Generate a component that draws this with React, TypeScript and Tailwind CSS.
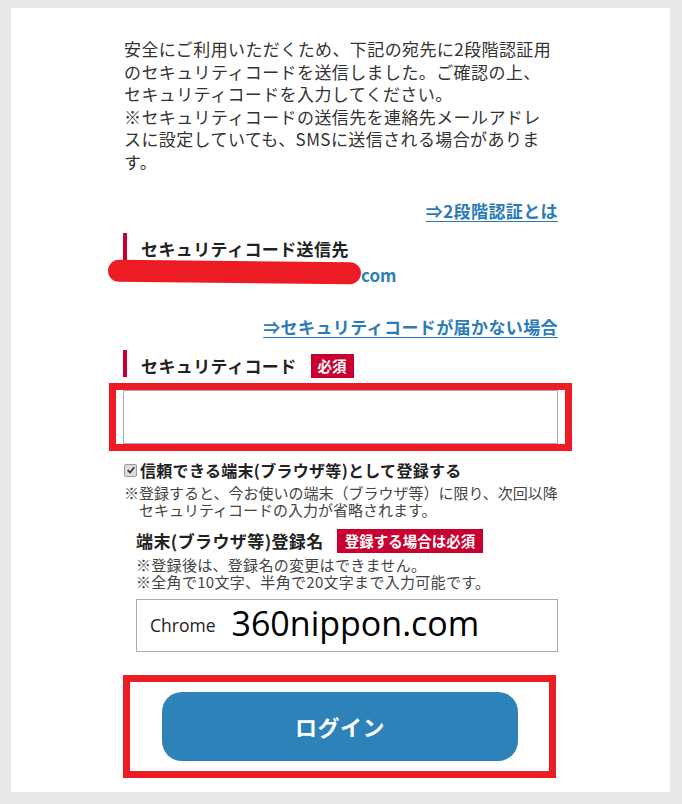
import React from "react";

const JP = { fontFamily: '"Noto Sans CJK JP", "Noto Sans", sans-serif' };

function Heading({ children, badge }: { children: React.ReactNode; badge?: string }) {
	return (
		<div className="flex items-start h-[27px] border-l-[4px] border-[#c9002f] pl-[14px]">
			<span className="mt-[4px] text-[17px] leading-[23px] tracking-[0.4px] font-bold text-[#222]">
				{children}
			</span>
			{badge && (
				<span className="mt-[4px] ml-[14px] h-[24px] px-[7px] bg-[#c9002f] text-white text-[14.5px] leading-[24px] font-bold">
					{badge}
				</span>
			)}
		</div>
	);
}

function Badge({ children }: { children: React.ReactNode }) {
	return (
		<span className="h-[24px] px-[8px] bg-[#c9002f] text-white text-[14.5px] leading-[24px] font-bold">
			{children}
		</span>
	);
}

export default function App() {
	return (
		<div className="min-h-[804px] bg-[#e8e8e8] pt-[8px] pl-[11px] pr-[12px]" style={JP}>
			<div className="bg-white w-[659px] pt-[30px] pb-[14px]">
				<div className="ml-[112px] w-[435px] flex flex-col">
					{/* 案内文 */}
					<p className="pl-[1px] text-[17px] leading-[22.5px] tracking-[0.4px] text-[#333]">
						安全にご利用いただくため、下記の宛先に2段階認証用
						<br />
						のセキュリティコードを送信しました。ご確認の上、
						<br />
						セキュリティコードを入力してください。
						<br />
						※セキュリティコードの送信先を連絡先メールアドレ
						<br />
						スに設定していても、SMSに送信される場合がありま
						<br />
						す。
					</p>

					<div className="mt-[27px] flex justify-end">
						<a className="text-[17px] leading-[22px] tracking-[0.4px] font-bold text-[#2b7bb9] underline underline-offset-[3px]">
							⇒2段階認証とは
						</a>
					</div>

					<div className="mt-[11px]">
						<Heading>セキュリティコード送信先</Heading>
					</div>
					<div className="flex items-start h-[27px]">
						<div className="ml-[-15px] mt-[1px] w-[253px] h-[22px] rounded-full bg-[#ed1c24] rotate-[0.6deg]" />
						<span className="mt-[3px] text-[17px] leading-[24px] font-bold text-[#2d7fb8]">com</span>
					</div>

					<div className="mt-[29px] flex justify-end">
						<a className="text-[17px] leading-[22px] tracking-[0.4px] font-bold text-[#2b7bb9] underline underline-offset-[3px]">
							⇒セキュリティコードが届かない場合
						</a>
					</div>

					<div className="mt-[12px]">
						<Heading badge="必須">セキュリティコード</Heading>
					</div>

					{/* 入力欄（赤枠） */}
					<div className="mt-[6px] ml-[-14px] w-[463px] border-[7px] border-[#ed1c24] px-[7px]">
						<input className="block w-full h-[54px] border border-[#aaa] bg-white outline-none" />
					</div>

					<label className="mt-[8px] flex items-center h-[22px] pl-[1px]">
						<span className="w-[13px] h-[13px] rounded-[2px] border border-[#9a9a9a] bg-[#dcdcdc] flex items-center justify-center">
							<svg viewBox="0 0 12 12" className="w-[10px] h-[10px]">
								<path d="M2 6.2 L4.8 9 L10 2.8" fill="none" stroke="#333" strokeWidth="2" />
							</svg>
						</span>
						<span className="ml-[3px] text-[16px] leading-[22px] tracking-[0.3px] font-bold text-[#222]">
							信頼できる端末(ブラウザ等)として登録する
						</span>
					</label>
					<div className="mt-[4px] pl-[1px] text-[15px] leading-[16.5px] text-[#444] whitespace-nowrap">
						<div>※登録すると、今お使いの端末（ブラウザ等）に限り、次回以降</div>
						<div className="pl-[15px]">セキュリティコードの入力が省略されます。</div>
					</div>

					<div className="ml-[13px] flex flex-col">
						<div className="mt-[11px] flex items-center h-[24px]">
							<span className="text-[17px] leading-[24px] tracking-[0.4px] font-bold text-[#222]">
								端末(ブラウザ等)登録名
							</span>
							<span className="ml-[13px] flex">
								<Badge>登録する場合は必須</Badge>
							</span>
						</div>
						<div className="mt-[3px] text-[15px] leading-[17px] tracking-[0.3px] text-[#444] whitespace-nowrap">
							<div>※登録後は、登録名の変更はできません。</div>
							<div>※全角で10文字、半角で20文字まで入力可能です。</div>
						</div>
						<div className="mt-[9px] h-[53px] border border-[#aaa] flex items-center pl-[13px]">
							<span className="text-[17.5px] text-[#222]" style={{ fontFamily: '"Open Sans", sans-serif' }}>
								Chrome
							</span>
							<span
								className="ml-[16px] -mt-[5px] text-[34px] leading-[40px] text-black"
								style={{ fontFamily: '"Open Sans", sans-serif' }}>
								360nippon.com
							</span>
						</div>
					</div>

					{/* ログインボタン（赤枠） */}
					<div className="mt-[23px] w-[433px] border-[7px] border-[#ed1c24] pt-[10px] pb-[10px] pl-[32px]">
						<button className="w-[356px] h-[69px] rounded-[20px] bg-[#2d82ba] text-white text-[22px] font-bold tracking-[0.5px]">
							ログイン
						</button>
					</div>
				</div>
			</div>
		</div>
	);
}
